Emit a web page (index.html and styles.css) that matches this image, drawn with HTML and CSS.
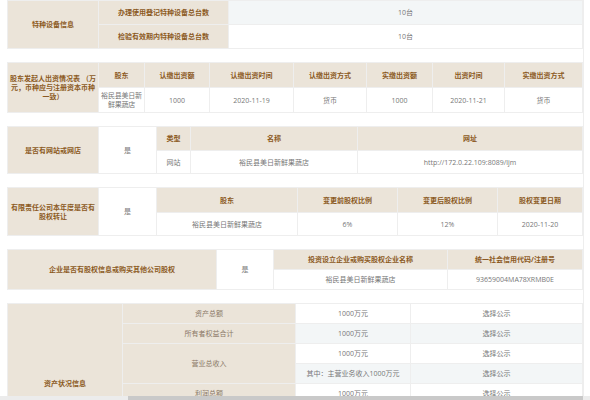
FILE: index.html
```html
<!DOCTYPE html>
<html lang="zh">
<head>
<meta charset="utf-8">
<link rel="stylesheet" href="styles.css">
</head>
<body>
<div class="wrap">
  <table class="t t1">
    <colgroup><col class="c91"><col class="c130"><col></colgroup>
    <tr class="h24 stripe">
      <td class="lab" rowspan="2">特种设备信息</td>
      <td class="lab">办理使用登记特种设备总台数</td>
      <td class="val">10台</td>
    </tr>
    <tr class="h24">
      <td class="lab">检验有效期内特种设备总台数</td>
      <td class="val">10台</td>
    </tr>
  </table>

  <table class="t t2">
    <colgroup><col class="c91"><col class="c46"><col class="c65"><col class="c84"><col class="c73"><col class="c66"><col class="c72"><col></colgroup>
    <tr class="h25">
      <td class="lab wrapcell" rowspan="2">股东发起人出资情况表 （万元，币种应与注册资本币种一致）</td>
      <td class="lab">股东</td>
      <td class="lab">认缴出资额</td>
      <td class="lab">认缴出资时间</td>
      <td class="lab">认缴出资方式</td>
      <td class="lab">实缴出资额</td>
      <td class="lab">出资时间</td>
      <td class="lab">实缴出资方式</td>
    </tr>
    <tr class="h25">
      <td class="val tight">裕民县美日新鲜果蔬店</td>
      <td class="val">1000</td>
      <td class="val">2020-11-19</td>
      <td class="val">货币</td>
      <td class="val">1000</td>
      <td class="val">2020-11-21</td>
      <td class="val">货币</td>
    </tr>
  </table>

  <table class="t t3">
    <colgroup><col class="c91"><col class="c58"><col class="c34"><col class="c167"><col></colgroup>
    <tr class="h24">
      <td class="lab" rowspan="2">是否有网站或网店</td>
      <td class="val" rowspan="2">是</td>
      <td class="lab">类型</td>
      <td class="lab">名称</td>
      <td class="lab">网址</td>
    </tr>
    <tr class="h23">
      <td class="val">网站</td>
      <td class="val">裕民县美日新鲜果蔬店</td>
      <td class="val">http://172.0.22.109:8089/ljm</td>
    </tr>
  </table>

  <table class="t t4">
    <colgroup><col class="c91"><col class="c58"><col class="c141"><col class="c100"><col class="c100"><col></colgroup>
    <tr class="h25">
      <td class="lab" rowspan="2">有限责任公司本年度是否有股权转让</td>
      <td class="val" rowspan="2">是</td>
      <td class="lab">股东</td>
      <td class="lab">变更前股权比例</td>
      <td class="lab">变更后股权比例</td>
      <td class="lab">股权变更日期</td>
    </tr>
    <tr class="h23">
      <td class="val">裕民县美日新鲜果蔬店</td>
      <td class="val">6%</td>
      <td class="val">12%</td>
      <td class="val">2020-11-20</td>
    </tr>
  </table>

  <table class="t t5">
    <colgroup><col class="c209"><col class="c57"><col class="c174"><col></colgroup>
    <tr class="h20">
      <td class="lab" rowspan="2">企业是否有股权信息或购买其他公司股权</td>
      <td class="val" rowspan="2">是</td>
      <td class="lab">投资设立企业或购买股权企业名称</td>
      <td class="lab">统一社会信用代码/注册号</td>
    </tr>
    <tr class="h20">
      <td class="val">裕民县美日新鲜果蔬店</td>
      <td class="val">93659004MA78XRMB0E</td>
    </tr>
  </table>

  <table class="t t6">
    <colgroup><col class="c115"><col class="c173"><col class="c115"><col></colgroup>
    <tr class="h20">
      <td class="lab" rowspan="8">资产状况信息</td>
      <td class="sub">资产总额</td>
      <td class="val">1000万元</td>
      <td class="val">选择公示</td>
    </tr>
    <tr class="h20 stripe">
      <td class="sub">所有者权益合计</td>
      <td class="val">1000万元</td>
      <td class="val">选择公示</td>
    </tr>
    <tr class="h20">
      <td class="sub" rowspan="2">营业总收入</td>
      <td class="val">1000万元</td>
      <td class="val">选择公示</td>
    </tr>
    <tr class="h20 stripe">
      <td class="val">其中：主营业务收入1000万元</td>
      <td class="val">选择公示</td>
    </tr>
    <tr class="h20">
      <td class="sub">利润总额</td>
      <td class="val">1000万元</td>
      <td class="val">选择公示</td>
    </tr>
    <tr class="h20 stripe">
      <td class="sub">净利润</td>
      <td class="val">1000万元</td>
      <td class="val">选择公示</td>
    </tr>
    <tr class="h20">
      <td class="sub">纳税总额</td>
      <td class="val">1000万元</td>
      <td class="val">选择公示</td>
    </tr>
    <tr class="h20 stripe">
      <td class="sub">负债总额</td>
      <td class="val">1000万元</td>
      <td class="val">选择公示</td>
    </tr>
  </table>
</div>
<div class="hscroll"><div class="thumb"></div></div>
</body>
</html>
```

FILE: styles.css
```css
html, body {
  margin: 0;
  padding: 0;
  background: #ffffff;
  overflow: hidden;
}
body {
  font-family: "Open Sans", "Noto Sans CJK SC", sans-serif;
  font-size: 7px;
  line-height: 9px;
  color: #777777;
}
.wrap {
  margin-left: 7px;
  width: 576px;
  border-right: 1px solid #eeeeee;
  min-height: 400px;
}
.t {
  width: 576px;
  table-layout: fixed;
  border-collapse: collapse;
  margin-bottom: 13px;
}
.t td {
  border: 1px solid #eeeeee;
  text-align: center;
  vertical-align: middle;
  padding: 0 2px;
  overflow: hidden;
}
.lab {
  background: #ebe4d9;
  color: #8c5a1e;
  font-weight: bold;
}
.sub {
  background: #ebe4d9;
  color: #8a7866;
}
.val {
  color: #777777;
}
.stripe .val {
  background: #f3f6f7;
}
.wrapcell {
  padding: 0 1px;
}
.t td.tight {
  padding: 0;
  letter-spacing: -0.2px;
}
.h20 { height: 20px; }
.h23 { height: 23px; }
.h24 { height: 24px; }
.h25 { height: 25px; }

.c34 { width: 34px; }
.c46 { width: 46px; }
.c57 { width: 57px; }
.c58 { width: 58px; }
.c65 { width: 65px; }
.c66 { width: 66px; }
.c72 { width: 72px; }
.c73 { width: 73px; }
.c84 { width: 84px; }
.c91 { width: 91px; }
.c100 { width: 100px; }
.c115 { width: 115px; }
.c130 { width: 130px; }
.c141 { width: 141px; }
.c167 { width: 167px; }
.c173 { width: 173px; }
.c174 { width: 174px; }
.c209 { width: 209px; }

.hscroll {
  position: fixed;
  left: 0;
  right: 0;
  bottom: 0;
  height: 4px;
  background: #ececec;
}
.hscroll .thumb {
  margin-left: 128px;
  width: 455px;
  height: 4px;
  background: #c9c9c9;
}
```
